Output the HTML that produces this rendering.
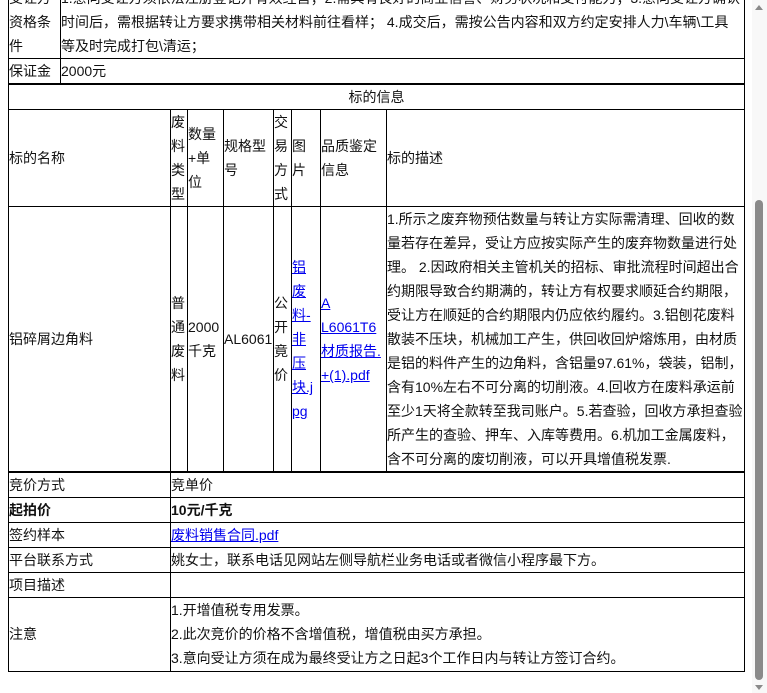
<!DOCTYPE html>
<html><head><meta charset="utf-8"><style>
*{margin:0;padding:0;box-sizing:border-box}
body{width:767px;height:693px;overflow:hidden;background:#fff;position:relative;font-family:"Liberation Sans","Noto Sans CJK SC",sans-serif;font-size:14px;color:#111}
.h{position:absolute;height:1px;background:#000}
.v{position:absolute;width:1px;background:#000}
.c{position:absolute;display:flex;align-items:center;line-height:24px;padding-left:1px;white-space:nowrap}
a{color:#00e;text-decoration:underline}
</style></head><body>
<!-- top table -->
<div class="c" style="left:8px;top:-14px;width:52px;height:76px;align-items:flex-start;line-height:24px">受让方<br>资格条<br>件</div>
<div class="c" style="left:60px;top:-14px;width:684px;height:76px;align-items:flex-start;line-height:24px">1.意向受让方须依法注册登记并有效经营；2.需具有良好的商业信誉、财务状况和支付能力；3.意向受让方确认<br>时间后，需根据转让方要求携带相关材料前往看样； 4.成交后，需按公告内容和双方约定安排人力\车辆\工具<br>等及时完成打包\清运；</div>
<div class="c" style="left:8px;top:58px;width:52px;height:26px">保证金</div>
<div class="c" style="left:60px;top:58px;width:684px;height:26px">2000元</div>
<div class="c" style="left:8px;top:85px;width:736px;height:24px;justify-content:center">标的信息</div>
<!-- header -->
<div class="c" style="left:8px;top:109px;width:162px;height:97px">标的名称</div>
<div class="c" style="left:170px;top:109px;width:17px;height:97px">废<br>料<br>类<br>型</div>
<div class="c" style="left:187px;top:109px;width:36px;height:97px">数量<br>+单<br>位</div>
<div class="c" style="left:223px;top:109px;width:50px;height:97px">规格型<br>号</div>
<div class="c" style="left:273px;top:109px;width:18px;height:97px">交<br>易<br>方<br>式</div>
<div class="c" style="left:291px;top:109px;width:29px;height:97px">图<br>片</div>
<div class="c" style="left:320px;top:109px;width:66px;height:97px">品质鉴定<br>信息</div>
<div class="c" style="left:386px;top:109px;width:358px;height:97px">标的描述</div>
<!-- data -->
<div class="c" style="left:8px;top:206px;width:162px;height:266px">铝碎屑边角料</div>
<div class="c" style="left:170px;top:206px;width:17px;height:266px">普<br>通<br>废<br>料</div>
<div class="c" style="left:187px;top:206px;width:36px;height:266px">2000<br>千克</div>
<div class="c" style="left:223px;top:206px;width:50px;height:266px">AL6061</div>
<div class="c" style="left:273px;top:206px;width:18px;height:266px">公<br>开<br>竟<br>价</div>
<div class="c" style="left:291px;top:206px;width:29px;height:266px"><a>铝<br>废<br>料-<br>非<br>压<br>块.j<br>pg</a></div>
<div class="c" style="left:320px;top:206px;width:66px;height:266px"><a>A<br>L6061T6<br>材质报告.<br>+(1).pdf</a></div>
<div class="c" style="left:386px;top:206px;width:358px;height:266px">1.所示之废弃物预估数量与转让方实际需清理、回收的数<br>量若存在差异，受让方应按实际产生的废弃物数量进行处<br>理。 2.因政府相关主管机关的招标、审批流程时间超出合<br>约期限导致合约期满的，转让方有权要求顺延合约期限，<br>受让方在顺延的合约期限内仍应依约履约。3.铝刨花废料<br>散装不压块，机械加工产生，供回收回炉熔炼用，由材质<br>是铝的料件产生的边角料，含铝量97.61%，袋装，铝制，<br>含有10%左右不可分离的切削液。4.回收方在废料承运前<br>至少1天将全款转至我司账户。5.若查验，回收方承担查验<br>所产生的查验、押车、入库等费用。6.机加工金属废料，<br>含不可分离的废切削液，可以开具增值税发票.</div>
<!-- bottom -->
<div class="c" style="left:8px;top:473px;width:162px;height:24px">竞价方式</div>
<div class="c" style="left:170px;top:473px;width:574px;height:24px">竞单价</div>
<div class="c" style="left:8px;top:497px;width:162px;height:25px;font-weight:bold">起拍价</div>
<div class="c" style="left:170px;top:497px;width:574px;height:25px;font-weight:bold">10元/千克</div>
<div class="c" style="left:8px;top:522px;width:162px;height:25px">签约样本</div>
<div class="c" style="left:170px;top:522px;width:574px;height:25px"><a>废料销售合同.pdf</a></div>
<div class="c" style="left:8px;top:547px;width:162px;height:25px">平台联系方式</div>
<div class="c" style="left:170px;top:547px;width:574px;height:25px">姚女士，联系电话见网站左侧导航栏业务电话或者微信小程序最下方。</div>
<div class="c" style="left:8px;top:572px;width:162px;height:25px">项目描述</div>
<div class="c" style="left:8px;top:597px;width:162px;height:74px">注意</div>
<div class="c" style="left:170px;top:597px;width:574px;height:74px">1.开增值税专用发票。<br>2.此次竞价的价格不含增值税，增值税由买方承担。<br>3.意向受让方须在成为最终受让方之日起3个工作日内与转让方签订合约。</div>
<!-- lines -->
<div class="h" style="left:8px;width:737px;top:58px"></div>
<div class="h" style="left:8px;width:737px;top:83px;height:2px"></div>
<div class="h" style="left:8px;width:737px;top:109px"></div>
<div class="h" style="left:8px;width:737px;top:206px"></div>
<div class="h" style="left:8px;width:737px;top:471px;height:2px"></div>
<div class="h" style="left:8px;width:737px;top:497px"></div>
<div class="h" style="left:8px;width:737px;top:522px"></div>
<div class="h" style="left:8px;width:737px;top:547px"></div>
<div class="h" style="left:8px;width:737px;top:572px"></div>
<div class="h" style="left:8px;width:737px;top:597px"></div>
<div class="h" style="left:8px;width:737px;top:671px"></div>
<div class="v" style="left:8px;top:0;height:672px"></div>
<div class="v" style="left:744px;top:0;height:672px"></div>
<div class="v" style="left:60px;top:0;height:84px"></div>
<div class="v" style="left:170px;top:109px;height:562px"></div>
<div class="v" style="left:187px;top:109px;height:363px"></div>
<div class="v" style="left:223px;top:109px;height:363px"></div>
<div class="v" style="left:273px;top:109px;height:363px"></div>
<div class="v" style="left:291px;top:109px;height:363px"></div>
<div class="v" style="left:320px;top:109px;height:363px"></div>
<div class="v" style="left:386px;top:109px;height:363px"></div>
<!-- scrollbar -->
<div style="position:absolute;left:752px;top:0;width:15px;height:693px;background:#f8f8f8"></div>
<div style="position:absolute;left:755px;top:5px;width:0;height:0;border-left:4px solid transparent;border-right:4px solid transparent;border-bottom:5px solid #8a8a8a"></div>
<div style="position:absolute;left:755px;top:200px;width:8px;height:480px;background:#8a8a8a;border-radius:4px"></div>
<div style="position:absolute;left:755px;top:685px;width:0;height:0;border-left:4px solid transparent;border-right:4px solid transparent;border-top:5px solid #8a8a8a"></div>
</body></html>
